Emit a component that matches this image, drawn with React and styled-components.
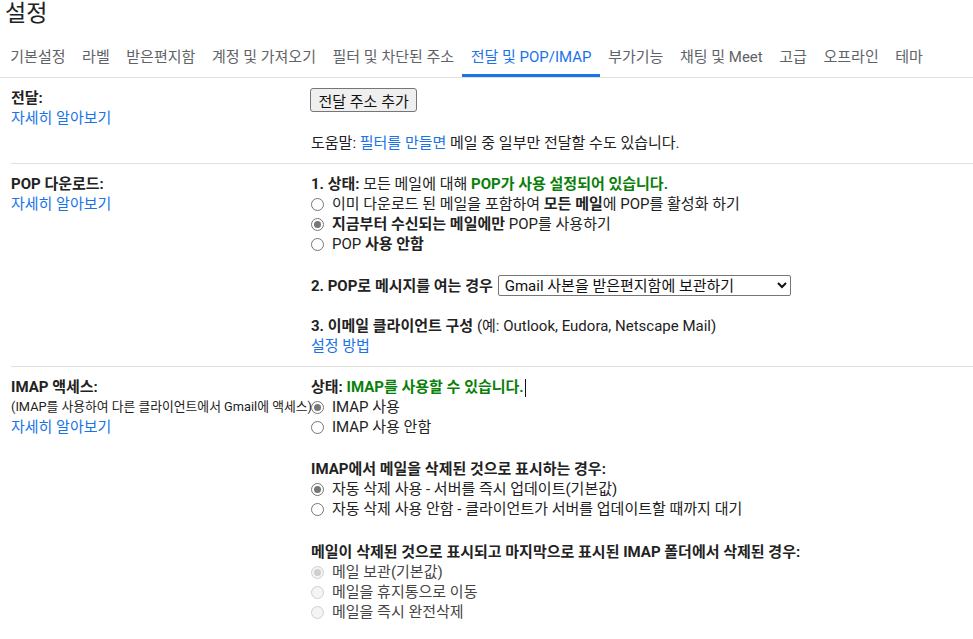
import styled, { createGlobalStyle, css } from "styled-components";

const GlobalStyle = createGlobalStyle`
  body {
    margin: 0;
    background: #fff;
    font-family: Roboto, "Noto Sans CJK KR", sans-serif;
    color: #222;
  }
`;

const Page = styled.div`
  width: 973px;
  overflow: hidden;
`;

const PageTitle = styled.h1`
  margin: 0;
  padding-left: 5px;
  font-size: 23px;
  font-weight: 400;
  line-height: 28px;
  color: #202124;
`;

const TabBar = styled.nav`
  display: flex;
  padding-left: 2px;
  border-bottom: 1px solid #e0e0e0;
`;

const Tab = styled.div`
  padding: 19px 8.3px 10px;
  font-size: 15px;
  line-height: 20px;
  white-space: nowrap;
  color: #5f6368;
  ${(p) =>
    p.$active &&
    css`
      color: #1a73e8;
      box-shadow: inset 0 -3px 0 #1a73e8;
    `}
`;

const Content = styled.div`
  padding-left: 11px;
`;

const Row = styled.section`
  display: grid;
  grid-template-columns: 300px 1fr;
  padding: 10px 0;
  border-bottom: ${(p) => (p.$last ? "none" : "1px solid #e0e0e0")};
  font-size: 15px;
  line-height: 20px;
`;

const Label = styled.div`
  display: flex;
  flex-direction: column;
  white-space: nowrap;
`;

const Name = styled.b`
  font-weight: 700;
  color: #222;
`;

const Note = styled.span`
  font-size: 12.8px;
  color: #222;
`;

const Link = styled.a`
  color: #1a73e8;
  text-decoration: none;
  cursor: pointer;
`;

const Body = styled.div`
  display: flex;
  flex-direction: column;
  white-space: nowrap;
`;

const Block = styled.div`
  display: flex;
  flex-direction: column;
  align-items: flex-start;
  margin-top: ${(p) => p.$gap || 0}px;
`;

const Line = styled.div`
  display: flex;
  align-items: center;
  gap: 5px;
`;

const Green = styled.b`
  color: #0a7f0a;
`;

const Caret = styled.span`
  display: inline-block;
  width: 1px;
  height: 18px;
  margin-left: 1px;
  background: #111;
  vertical-align: middle;
`;

const Button = styled.button`
  height: 24px;
  padding: 0 7.5px;
  margin-left: -1px;
  font-family: inherit;
  font-size: 15px;
  color: #111;
  background: #efefef;
  border: 1px solid #767676;
  border-radius: 3px;
`;

const Select = styled.select`
  width: 293px;
  height: 21px;
  padding: 0 2px;
  font-family: inherit;
  font-size: 15px;
  color: #111;
  background: #fff;
  border: 1px solid #767676;
  border-radius: 2px;
`;

const Choice = styled.label`
  display: flex;
  align-items: center;
  height: 20px;
  gap: 8px;
  color: ${(p) => (p.$disabled ? "#444" : "#222")};
`;

const Radio = styled.span`
  box-sizing: border-box;
  flex: none;
  width: 13px;
  height: 13px;
  border-radius: 50%;
  border: 1px solid ${(p) => (p.$disabled ? "#cfcfcf" : "#767676")};
  background: ${(p) => (p.$disabled ? "#f4f4f4" : "#fff")};
  position: relative;
  ${(p) =>
    p.$checked &&
    css`
      &::after {
        content: "";
        position: absolute;
        inset: 2px;
        border-radius: 50%;
        background: ${p.$disabled ? "#cfcfcf" : "#767676"};
      }
    `}
`;

const Option = ({ checked, disabled, children }) => (
  <Choice $disabled={disabled}>
    <Radio $checked={checked} $disabled={disabled} />
    <span>{children}</span>
  </Choice>
);

const tabs = [
  "기본설정",
  "라벨",
  "받은편지함",
  "계정 및 가져오기",
  "필터 및 차단된 주소",
  "전달 및 POP/IMAP",
  "부가기능",
  "채팅 및 Meet",
  "고급",
  "오프라인",
  "테마",
];

export default function App() {
  return (
    <Page>
      <GlobalStyle />
      <PageTitle>설정</PageTitle>
      <TabBar>
        {tabs.map((t) => (
          <Tab key={t} $active={t === "전달 및 POP/IMAP"}>
            {t}
          </Tab>
        ))}
      </TabBar>

      <Content>
        <Row>
          <Label>
            <Name>전달:</Name>
            <Link>자세히 알아보기</Link>
          </Label>
          <Body>
            <Block>
              <Button>전달 주소 추가</Button>
            </Block>
            <Block $gap={21}>
              <span>
                도움말: <Link>필터를 만들면</Link> 메일 중 일부만 전달할 수도 있습니다.
              </span>
            </Block>
          </Body>
        </Row>

        <Row>
          <Label>
            <Name>POP 다운로드:</Name>
            <Link>자세히 알아보기</Link>
          </Label>
          <Body>
            <Block>
              <span>
                <b>1. 상태:</b> 모든 메일에 대해 <Green>POP가 사용 설정되어 있습니다.</Green>
              </span>
              <Option>
                이미 다운로드 된 메일을 포함하여 <b>모든 메일</b>에 POP를 활성화 하기
              </Option>
              <Option checked>
                <b>지금부터 수신되는 메일에만</b> POP를 사용하기
              </Option>
              <Option>
                POP <b>사용 안함</b>
              </Option>
            </Block>
            <Block $gap={21}>
              <Line>
                <b>2. POP로 메시지를 여는 경우</b>
                <Select defaultValue="keep">
                  <option value="keep">Gmail 사본을 받은편지함에 보관하기</option>
                  <option value="read">Gmail 사본을 읽은 상태로 표시하기</option>
                  <option value="archive">Gmail 사본 보관처리하기</option>
                  <option value="delete">Gmail 사본 삭제하기</option>
                </Select>
              </Line>
            </Block>
            <Block $gap={20}>
              <span>
                <b>3. 이메일 클라이언트 구성</b> (예: Outlook, Eudora, Netscape Mail)
              </span>
              <Link>설정 방법</Link>
            </Block>
          </Body>
        </Row>

        <Row $last>
          <Label>
            <Name>IMAP 액세스:</Name>
            <Note>(IMAP를 사용하여 다른 클라이언트에서 Gmail에 액세스)</Note>
            <Link>자세히 알아보기</Link>
          </Label>
          <Body>
            <Block>
              <span>
                <b>상태:</b> <Green>IMAP를 사용할 수 있습니다.</Green>
                <Caret />
              </span>
              <Option checked>IMAP 사용</Option>
              <Option>IMAP 사용 안함</Option>
            </Block>
            <Block $gap={22}>
              <b>IMAP에서 메일을 삭제된 것으로 표시하는 경우:</b>
              <Option checked>자동 삭제 사용 - 서버를 즉시 업데이트(기본값)</Option>
              <Option>자동 삭제 사용 안함 - 클라이언트가 서버를 업데이트할 때까지 대기</Option>
            </Block>
            <Block $gap={23}>
              <b>메일이 삭제된 것으로 표시되고 마지막으로 표시된 IMAP 폴더에서 삭제된 경우:</b>
              <Option checked disabled>
                메일 보관(기본값)
              </Option>
              <Option disabled>메일을 휴지통으로 이동</Option>
              <Option disabled>메일을 즉시 완전삭제</Option>
            </Block>
          </Body>
        </Row>
      </Content>
    </Page>
  );
}
